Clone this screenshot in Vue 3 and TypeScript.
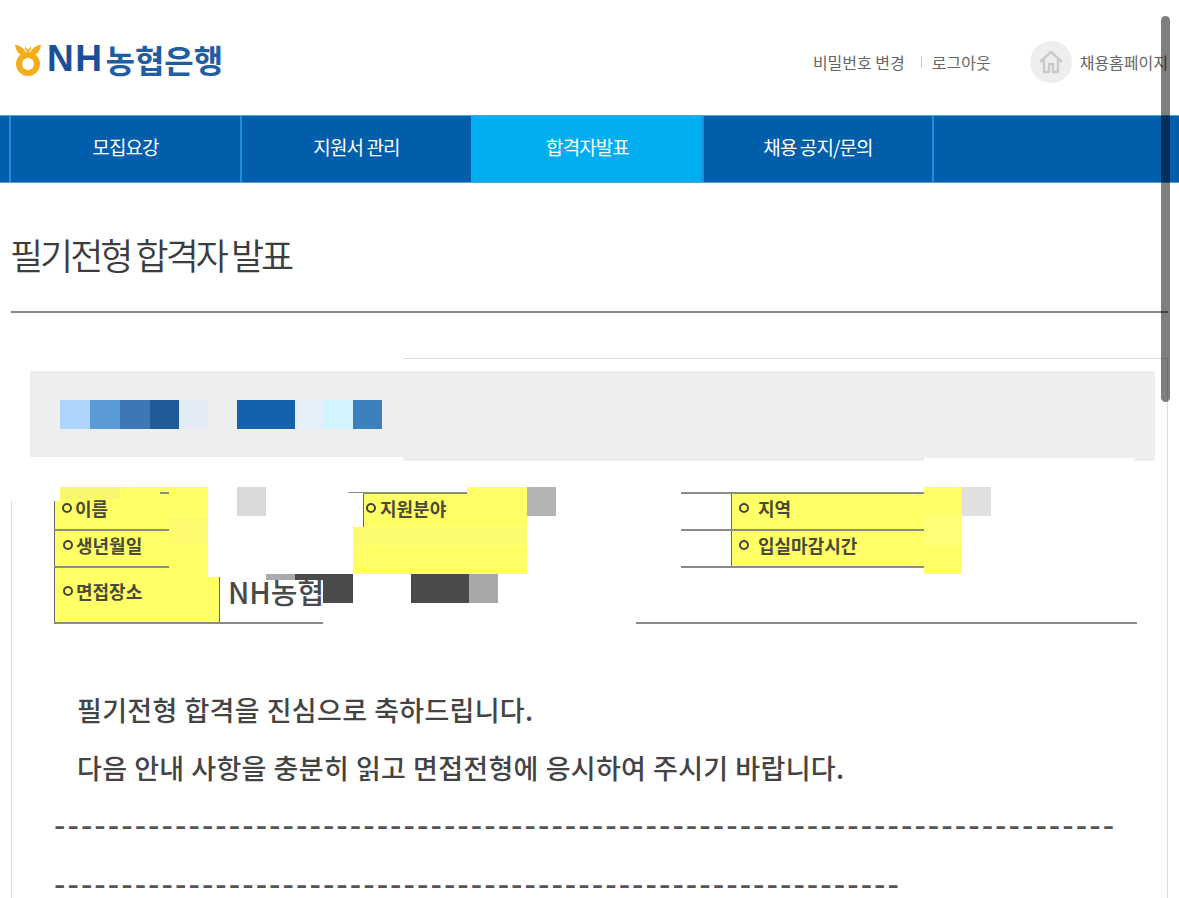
<script setup lang="ts">
interface Patch { x: number; y: number; w: number; h: number; c: string }
const navItems = ['모집요강', '지원서 관리', '합격자발표', '채용 공지/문의']
const dashes1 = '-'.repeat(79)
const dashes2 = '-'.repeat(63)
const patches: Patch[] = [
  // white erasures
  { x: 0, y: 340, w: 403, h: 30, c: '#fff' },
  { x: 0, y: 457, w: 403, h: 35, c: '#fff' },
  { x: 0, y: 370, w: 30, h: 130, c: '#fff' },
  { x: 54, y: 487, w: 6, h: 14, c: '#fff' },
  { x: 924, y: 458, w: 210, h: 29, c: '#fff' },
  { x: 169, y: 487, w: 179, h: 90, c: '#fff' },
  { x: 348, y: 493, w: 5, h: 84, c: '#fff' },
  { x: 353, y: 493, w: 10, h: 34, c: '#fff' },
  { x: 323, y: 574, w: 313, h: 52, c: '#fff' },
  { x: 527, y: 487, w: 154, h: 90, c: '#fff' },
  { x: 962, y: 487, w: 175, h: 90, c: '#fff' },
  // blue redacted heading
  { x: 60, y: 400, w: 30, h: 29, c: '#aed5fb' },
  { x: 90, y: 400, w: 30, h: 29, c: '#5a9ad6' },
  { x: 120, y: 400, w: 30, h: 29, c: '#3d78b4' },
  { x: 150, y: 400, w: 29, h: 29, c: '#1f5c99' },
  { x: 179, y: 400, w: 29, h: 29, c: '#e4ebf4' },
  { x: 208, y: 400, w: 29, h: 29, c: '#ededed' },
  { x: 237, y: 400, w: 58, h: 29, c: '#1661ae' },
  { x: 295, y: 400, w: 29, h: 29, c: '#e5eff8' },
  { x: 324, y: 400, w: 29, h: 29, c: '#d3f3fe' },
  { x: 353, y: 400, w: 29, h: 29, c: '#3d81bc' },
  // redacted values
  { x: 60, y: 487, w: 100, h: 12, c: '#ffff66' },
  { x: 60, y: 487, w: 60, h: 12, c: '#f8f870' },
  { x: 160, y: 487, w: 48, h: 4, c: '#ffff66' },
  { x: 169, y: 491, w: 39, h: 89, c: '#ffff66' },
  { x: 169, y: 516, w: 39, h: 29, c: '#fcfc6e' },
  { x: 237, y: 487, w: 29, h: 29, c: '#d9d9d9' },
  { x: 467, y: 487, w: 60, h: 40, c: '#ffff66' },
  { x: 527, y: 487, w: 29, h: 29, c: '#b3b3b3' },
  { x: 353, y: 527, w: 174, h: 47, c: '#ffff66' },
  { x: 353, y: 527, w: 174, h: 18, c: '#fbfb70' },
  { x: 924, y: 487, w: 38, h: 87, c: '#ffff66' },
  { x: 924, y: 516, w: 38, h: 29, c: '#ffff78' },
  { x: 962, y: 487, w: 29, h: 29, c: '#e0e0e0' },
  { x: 266, y: 574, w: 29, h: 6, c: '#aaaaaa' },
  { x: 295, y: 574, w: 28, h: 6, c: '#4a4a4a' },
  { x: 323, y: 574, w: 30, h: 29, c: '#4a4a4a' },
  { x: 411, y: 574, w: 58, h: 29, c: '#4a4a4a' },
  { x: 469, y: 574, w: 29, h: 29, c: '#a8a8a8' },
]
function patchStyle(p: Patch) {
  return { left: p.x + 'px', top: p.y + 'px', width: p.w + 'px', height: p.h + 'px', background: p.c }
}
</script>

<template>
  <div class="page">
    <header class="top">
      <div class="logo">
        <svg class="emblem" width="28" height="32" viewBox="0 0 28 32">
          <circle cx="14" cy="20" r="9" fill="none" stroke="#f5ae1b" stroke-width="6" />
          <path d="M1 1 C5 1 9 3 13 10 L10 12 C5 11 2 7 1 1Z" fill="#f5ae1b" />
          <path d="M27 1 C23 1 19 3 15 10 L18 12 C23 11 26 7 27 1Z" fill="#f5ae1b" />
          <path d="M11 2 L14 6 L17 2 L17 5 L14 9 L11 5Z" fill="#f5ae1b" />
        </svg>
        <span class="nh">NH</span><span class="bank">농협은행</span>
      </div>
      <div class="util">
        <a class="link">비밀번호 변경</a>
        <span class="sep"></span>
        <a class="link">로그아웃</a>
        <span class="home">
          <svg width="26" height="26" viewBox="0 0 26 26" fill="none" stroke="#c9c9c9" stroke-width="2.4" stroke-linejoin="round">
            <path d="M2 13 L13 3 L24 13 M6 11 V23 H11 V15 H15 V23 H20 V11" />
          </svg>
        </span>
        <a class="link">채용홈페이지</a>
      </div>
    </header>

    <nav class="nav">
      <a v-for="(item, i) in navItems" :key="item" class="nav-item" :class="{ active: i === 2 }">{{ item }}</a>
    </nav>

    <h1 class="title">필기전형 합격자 발표</h1>

    <section class="frame">
      <div class="banner"></div>
      <div class="table">
        <div class="row grid">
          <div class="label"><i class="ring"></i>이름</div>
          <div></div>
          <div class="label tight"><i class="ring"></i>지원분야</div>
          <div></div>
          <div class="label wide"><i class="ring"></i>지역</div>
          <div></div>
        </div>
        <div class="row grid">
          <div class="label shift"><i class="ring"></i>생년월일</div>
          <div></div>
          <div class="label"></div>
          <div></div>
          <div class="label wide"><i class="ring"></i>입실마감시간</div>
          <div></div>
        </div>
        <div class="row last">
          <div class="label place shift"><i class="ring"></i>면접장소</div>
          <div class="value">NH농협</div>
        </div>
      </div>
      <div class="message">
        <p>필기전형 합격을 진심으로 축하드립니다.</p>
        <p>다음 안내 사항을 충분히 읽고 면접전형에 응시하여 주시기 바랍니다.</p>
      </div>
      <div class="dash first">{{ dashes1 }}</div>
      <div class="dash">{{ dashes2 }}</div>
    </section>

    <div v-for="(p, i) in patches" :key="i" class="patch" :style="patchStyle(p)"></div>
    <div class="scrollbar"></div>
  </div>
</template>

<style>
html, body { margin: 0; overflow: hidden; background: #fff; }
</style>

<style scoped>
.page {
  position: relative;
  width: 1179px;
  height: 898px;
  overflow: hidden;
  background: #fff;
  font-family: "Noto Sans CJK KR", "Noto Sans", sans-serif;
  color: #444;
}
.top {
  height: 114px;
  display: flex;
  align-items: center;
  justify-content: space-between;
  padding: 10px 11px 0 14px;
  box-sizing: border-box;
}
.logo { display: flex; align-items: center; height: 40px; margin-top: -6px; }
.emblem { margin-right: 5px; margin-top: 2px; }
.nh {
  font-family: "Liberation Sans", sans-serif;
  font-weight: 700;
  font-size: 37px;
  color: #1b4f9c;
  letter-spacing: 1.5px;
}
.bank {
  font-weight: 700;
  font-size: 32px;
  letter-spacing: 0;
  color: #1f5ea3;
  margin-left: 2px;
}
.util { display: flex; align-items: center; font-size: 16px; color: #666; }
.link { line-height: 24px; white-space: nowrap; }
.sep { width: 1px; height: 12px; background: #ccc; margin: 0 10px 0 16px; }
.home {
  width: 42px;
  height: 42px;
  border-radius: 50%;
  background: #eeeeee;
  display: flex;
  align-items: center;
  justify-content: center;
  margin: 0 8px 0 39px;
}
.nav {
  height: 68px;
  box-sizing: border-box;
  margin-top: 1px;
  display: flex;
  padding-left: 9px;
  background: #005eaa;
  border-top: 1px solid #4ba3dc;
  border-bottom: 1px solid #4ba3dc;
}
.nav-item {
  width: 231px;
  box-sizing: border-box;
  border-left: 2px solid #1f8fdc;
  display: flex;
  align-items: center;
  justify-content: center;
  color: #fff;
  font-size: 19px;
  letter-spacing: -0.9px;
  padding-bottom: 6px;
}
.nav-item:last-child { width: 232px; border-right: 2px solid #1f8fdc; }
.nav-item.active { background: #00aeef; border-left-color: #00aeef; }
.title {
  margin: 0 0 0 11px;
  width: 1157px;
  height: 130px;
  box-sizing: border-box;
  border-bottom: 2px solid #888;
  padding-top: 44px;
  font-size: 36px;
  line-height: 54px;
  font-weight: 350;
  letter-spacing: -3px;
  text-indent: -1px;
  color: #3d3d3d;
}
.frame {
  margin: 45px 0 0 11px;
  width: 1157px;
  height: 540px;
  box-sizing: border-box;
  border: 1px solid #ddd;
  border-bottom: none;
}
.banner {
  margin: 12px 0 0 18px;
  width: 1125px;
  height: 90px;
  background: #eeeeee;
}
.table {
  margin: 31px 0 0 42px;
  width: 1083px;
}
.row { border-top: 2px solid #8a8a8a; box-sizing: border-box; height: 37px; }
.row.grid { display: grid; grid-template-columns: 115px 194px 318px 50px 193px 213px; }
.row.last { display: flex; height: 58px; border-bottom: 2px solid #8a8a8a; }
.label {
  background: #ffff66;
  border-left: 1px solid #666;
  box-sizing: border-box;
  display: flex;
  align-items: center;
  padding: 0 0 8px 7px;
  font-size: 18px;
  font-weight: 700;
  color: #4a4a36;
  white-space: nowrap;
}
.label.shift { padding-left: 8px; }
.label.tight { padding-left: 2px; }
.label.tight .ring { margin-right: 4px; }
.label.wide .ring { margin-right: 9px; }
.label.place { width: 166px; border-right: 1px solid #666; }
.ring {
  width: 10px;
  height: 10px;
  box-sizing: border-box;
  border: 2px solid #444;
  border-radius: 50%;
  margin-right: 3px;
  flex: none;
}
.value {
  display: flex;
  align-items: center;
  padding: 0 0 8px 8px;
  font-size: 29px;
  font-weight: 500;
  color: #4a4a4a;
}
.message {
  margin: 66px 0 0 65px;
  font-size: 27px;
  font-weight: 500;
  letter-spacing: 0.3px;
  word-spacing: 0.5px;
  color: #444;
}
.message p { margin: 0 0 18px; line-height: 40px; }
.message p:last-child { margin-bottom: 0; }
.dash {
  margin: 35px 0 0 42px;
  font-size: 32px;
  line-height: 24px;
  letter-spacing: 2.02px;
  font-weight: 500;
  color: #555;
  white-space: nowrap;
}
.dash.first { margin-top: 23px; }
.patch { position: absolute; }
.scrollbar {
  position: absolute;
  left: 1161px;
  top: 16px;
  width: 9px;
  height: 386px;
  border-radius: 5px;
  background: rgba(0, 0, 0, 0.5);
}
</style>
